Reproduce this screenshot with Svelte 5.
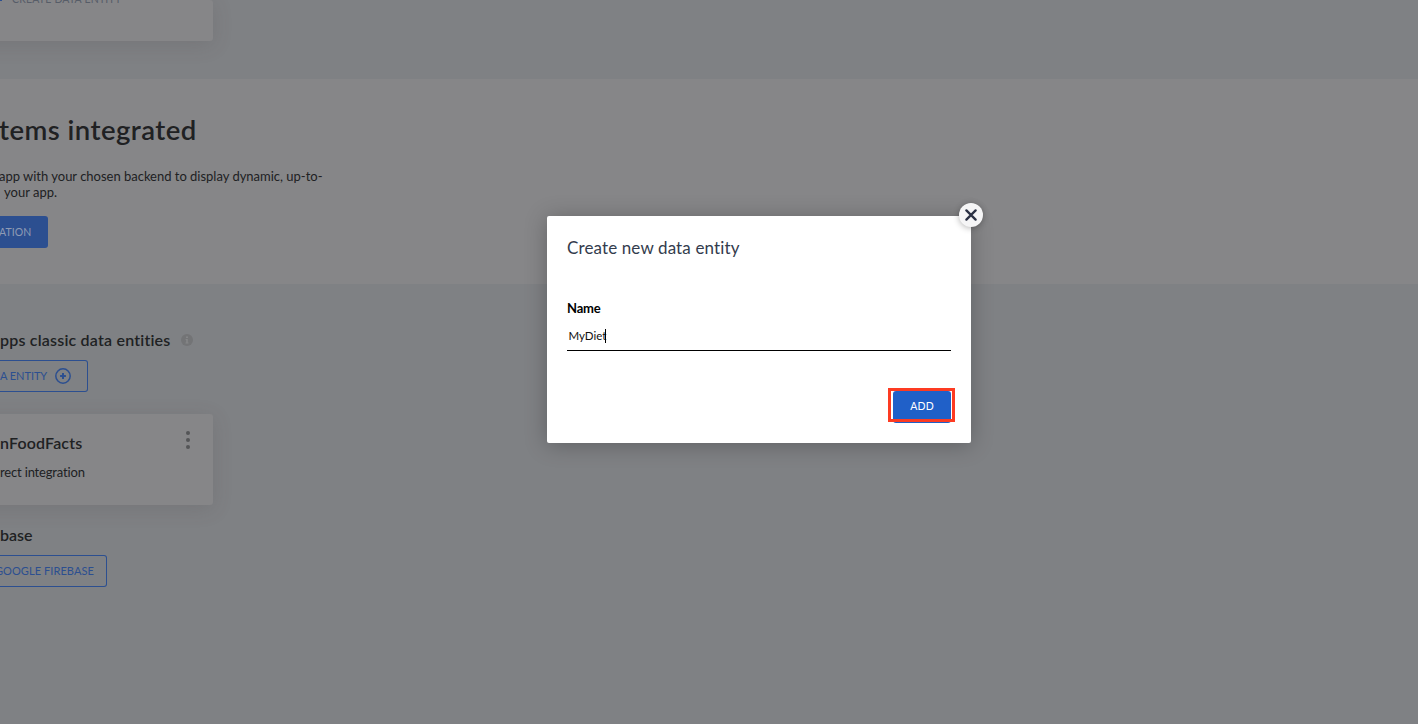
<script>
  let name = $state('MyDiet');
</script>

<main class="page">
  <section class="band top">
    <div class="card upper">
      <span class="dash"></span><span class="t create">CREATE DATA ENTITY</span>
    </div>
  </section>

  <section class="band systems">
    <h1 class="t">tems integrated</h1>
    <p class="desc"><span class="t d1">app with your chosen backend to display dynamic, up-to-</span><span class="t d2">your app.</span></p>
    <button class="solid"><span class="t">ATION</span></button>
  </section>

  <section class="band entities">
    <div class="heading">
      <h2 class="t classic">pps classic data entities</h2>
      <svg class="info" width="12" height="12" viewBox="0 0 12 12"><circle cx="6" cy="6" r="6" fill="#737476" /><path d="M5 2.5h2v1.6H5zM4.6 5h2.2v3.5h.7v1H4.5v-1h.7V6h-.6z" fill="#858688" /></svg>
    </div>
    <button class="outline first">
      <span class="t">A ENTITY</span>
      <svg width="16" height="16" viewBox="0 0 16 16" fill="none" stroke="#2c4f90"><circle cx="8" cy="8" r="7.2" stroke-width="1.5" /><path d="M8 5.1v5.8M5.1 8h5.8" stroke-width="2" /></svg>
    </button>
    <div class="card food">
      <div class="info-col">
        <h3 class="t">nFoodFacts</h3>
        <span class="t sub">rect integration</span>
      </div>
      <svg class="dots" width="4" height="18" viewBox="0 0 4 18" fill="#545557"><circle cx="2" cy="2" r="2" /><circle cx="2" cy="9" r="2" /><circle cx="2" cy="16" r="2" /></svg>
    </div>
    <h2 class="t base">base</h2>
    <button class="outline second"><span class="t">GOOGLE FIREBASE</span></button>
  </section>
</main>

<div class="overlay">
  <div class="modal">
    <button class="close" aria-label="Close">
      <svg width="12" height="12" viewBox="0 0 12 12"><path d="M1.4 1.4l9.2 9.2M10.6 1.4l-9.2 9.2" stroke="#2b3144" stroke-width="2.3" stroke-linecap="round" /></svg>
    </button>
    <h2 class="t title">Create new data entity</h2>
    <div class="t label">Name</div>
    <div class="field"><span class="t value">{name}</span><i class="caret"></i></div>
    <div class="actions">
      <button class="add"><span class="t">ADD</span></button>
      <div class="ring"></div>
    </div>
  </div>
</div>

<style>
  :global(body) { background: #7f8184; overflow: hidden; }
  * { box-sizing: border-box; margin: 0; }
  .page, .overlay { font-family: Lato, "Open Sans", sans-serif; font-variant-ligatures: none; color: #202123; }
  .page { width: 1418px; height: 724px; overflow: hidden; background: #7f8184; }
  .t { white-space: nowrap; display: block; }
  button { font-family: inherit; border: 0; padding: 0; display: flex; align-items: center; }
  button .t { padding-bottom: 2px; }

  .top { height: 79px; }
  .card { width: 253px; margin-left: -40px; padding-left: 40px; background: #868688; border-radius: 3px; box-shadow: 0 4px 20px rgba(70, 60, 60, 0.16); }
  .upper { height: 41px; display: flex; }
  .dash { width: 2px; height: 1px; background: #2c4f90; }
  .create { margin: -8px 0 0 10px; font-size: 10.5px; line-height: 14px; letter-spacing: 0.2px; color: #575d68; }

  .systems { height: 205px; background: #868688; padding-top: 34px; }
  h1 { font-size: 27.5px; line-height: 34px; font-weight: 600; letter-spacing: 0.46px; margin-left: -1px; }
  .desc { margin-top: 21px; font-size: 13px; line-height: 16px; }
  .d1 { margin-left: -1px; letter-spacing: -0.01px; }
  .d2 { margin-left: 4px; letter-spacing: 0; }
  .solid { margin-top: 16px; width: 48px; height: 32px; background: #2c4f90; border-radius: 0 3px 3px 0; color: #8f9bb4; font-size: 10.5px; letter-spacing: 0.1px; }
  .solid .t { margin-left: -1px; padding-bottom: 0; }

  .entities { padding-top: 46px; }
  .heading { display: flex; align-items: center; height: 20px; }
  h2, h3 { font-weight: 600; font-size: 16px; line-height: 20px; }
  .classic { width: 181px; letter-spacing: 0.2px; padding-bottom: 1px; }
  .outline { height: 32px; border: 1px solid #2c4f90; border-left: 0; border-radius: 0 3px 3px 0; background: none; color: #2c4f90; font-size: 11px; }
  .first { width: 88px; margin-top: 10px; }
  .first .t { letter-spacing: -0.05px; }
  .first svg { margin-left: auto; margin-right: 16px; }
  .food { display: flex; justify-content: space-between; height: 91px; margin-top: 22px; padding-top: 17px; padding-right: 23px; }
  h3 { line-height: 24px; letter-spacing: 0.15px; }
  .sub { margin-top: 9px; font-size: 13px; line-height: 16px; letter-spacing: -0.17px; }
  .base { margin-top: 20px; }
  .second { width: 107px; margin-top: 10px; }
  .second .t { margin-left: -5px; letter-spacing: 0.07px; }

  .overlay { position: absolute; inset: 0; display: flex; justify-content: center; align-items: flex-start; padding-top: 216px; overflow: hidden; }
  .modal { position: relative; width: 424px; height: 227px; margin-left: 100px; background: #fff; border-radius: 2px; padding: 20px 20px 0; box-shadow: 0 2px 22px rgba(0, 0, 0, 0.26); }
  .close { position: absolute; right: -12px; top: -13px; width: 24px; height: 24px; border-radius: 50%; background: #f5f5f6; justify-content: center; box-shadow: 0 1px 6px rgba(0, 0, 0, 0.3); }
  .title { font-size: 17px; line-height: 24px; font-weight: 400; letter-spacing: 0.13px; color: #333c4d; }
  .label { margin-top: 40px; font-size: 13px; line-height: 16px; font-weight: 700; letter-spacing: -0.2px; color: #000; }
  .field { display: flex; align-items: center; margin-top: 6px; height: 29px; border-bottom: 1px solid #000; padding-left: 1.5px; color: #111; font-size: 11.5px; }
  .value { padding-bottom: 1px; }
  .caret { width: 1px; height: 14px; background: #000; margin-left: -1px; }
  .actions { position: relative; display: flex; justify-content: flex-end; margin-top: 40px; }
  .add { width: 58px; height: 32px; border-radius: 3px; background: #2060c8; color: #fff; justify-content: center; font-size: 10.5px; letter-spacing: 0.2px; }
  .ring { position: absolute; right: -4px; top: -3px; width: 67px; height: 34px; border: 3px solid #fd3b22; }
</style>
